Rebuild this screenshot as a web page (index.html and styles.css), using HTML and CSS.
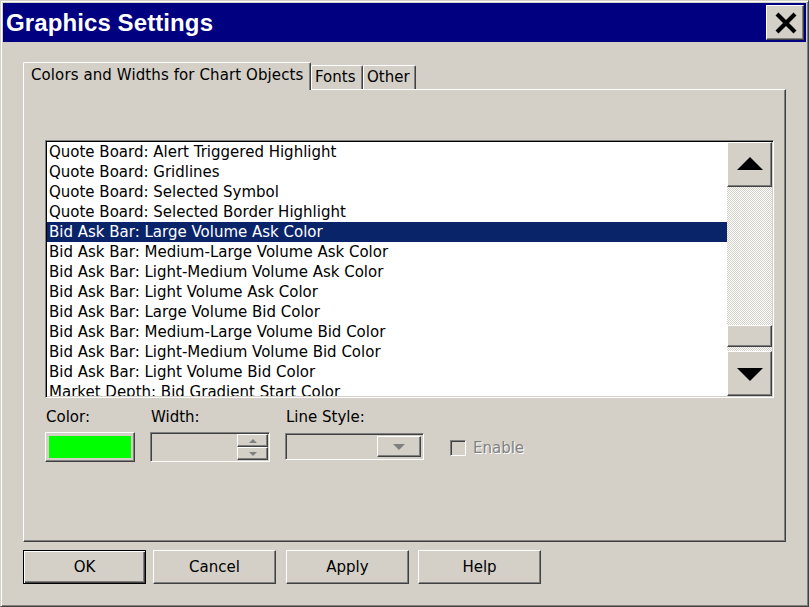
FILE: index.html
```html
<!DOCTYPE html>
<html>
<head>
<meta charset="utf-8">
<title>Graphics Settings</title>
<link rel="stylesheet" href="styles.css">
</head>
<body>
<div class="window">
  <div class="titlebar">
    <span class="title">Graphics Settings</span>
    <button class="close raised" aria-label="Close">
      <svg width="22" height="22" viewBox="0 0 22 22"><path d="M2 2 L20 20 M20 2 L2 20" stroke="#000" stroke-width="4.2" fill="none"/></svg>
    </button>
  </div>
  <div class="body">
    <div class="tabs">
      <div class="tab active">Colors and Widths for Chart Objects</div>
      <div class="tab fonts">Fonts</div>
      <div class="tab other">Other</div>
    </div>
    <div class="panel">
      <div class="listbox">
        <ul class="items">
          <li>Quote Board: Alert Triggered Highlight</li>
          <li>Quote Board: Gridlines</li>
          <li>Quote Board: Selected Symbol</li>
          <li>Quote Board: Selected Border Highlight</li>
          <li class="sel">Bid Ask Bar: Large Volume Ask Color</li>
          <li>Bid Ask Bar: Medium-Large Volume Ask Color</li>
          <li>Bid Ask Bar: Light-Medium Volume Ask Color</li>
          <li>Bid Ask Bar: Light Volume Ask Color</li>
          <li>Bid Ask Bar: Large Volume Bid Color</li>
          <li>Bid Ask Bar: Medium-Large Volume Bid Color</li>
          <li>Bid Ask Bar: Light-Medium Volume Bid Color</li>
          <li>Bid Ask Bar: Light Volume Bid Color</li>
          <li>Market Depth: Bid Gradient Start Color</li>
        </ul>
        <div class="scrollbar">
          <div class="sbtn raised"><span class="tri-up"></span></div>
          <div class="track">
            <div class="thumb raised"></div>
          </div>
          <div class="sbtn raised"><span class="tri-down"></span></div>
        </div>
      </div>
      <div class="controls">
        <div class="group g-color">
          <div class="label">Color:</div>
          <div class="colorbtn raised"><div class="swatch"></div></div>
        </div>
        <div class="group g-width">
          <div class="label">Width:</div>
          <div class="spin sunken">
            <div class="spinbtns">
              <div class="spb raised"><span class="mini-up"></span></div>
              <div class="spb raised"><span class="mini-down"></span></div>
            </div>
          </div>
        </div>
        <div class="group g-style">
          <div class="label">Line Style:</div>
          <div class="combo sunken">
            <div class="dropbtn raised"><span class="mini-down big"></span></div>
          </div>
        </div>
        <div class="check">
          <span class="box"></span>
          <span class="disabled">Enable</span>
        </div>
      </div>
    </div>
    <div class="buttons">
      <button class="btn default">OK</button>
      <button class="btn raised b-cancel">Cancel</button>
      <button class="btn raised b-apply">Apply</button>
      <button class="btn raised b-help">Help</button>
    </div>
  </div>
</div>
</body>
</html>
```
FILE: styles.css
```css
* { box-sizing: border-box; }
html, body { margin: 0; padding: 0; background: #d4d0c8; }
body {
  width: 809px;
  height: 607px;
  overflow: hidden;
  font-family: "DejaVu Sans", "Liberation Sans", Arial, sans-serif;
  font-size: 15px;
  color: #000;
}
.window {
  width: 809px;
  height: 607px;
  background: #d4d0c8;
  border-top: 1px solid #d4d0c8;
  border-left: 1px solid #d4d0c8;
  border-right: 1px solid #404040;
  border-bottom: 1px solid #404040;
  box-shadow: inset 1px 1px #fff, inset -1px -1px #808080;
  padding: 2px;
  display: flex;
  flex-direction: column;
}
.raised {
  background: #d4d0c8;
  border-top: 1px solid #fff;
  border-left: 1px solid #fff;
  border-right: 1px solid #404040;
  border-bottom: 1px solid #404040;
  box-shadow: inset -1px -1px #808080;
}
.sunken {
  border-top: 1px solid #808080;
  border-left: 1px solid #808080;
  border-right: 1px solid #fff;
  border-bottom: 1px solid #fff;
  box-shadow: inset 1px 1px #404040, inset -1px -1px #d4d0c8;
}
.titlebar {
  height: 39px;
  background: #000080;
  display: flex;
  align-items: flex-start;
  justify-content: space-between;
  padding: 2px 2px 0 3px;
}
.title {
  font-family: "Liberation Sans", Arial, sans-serif;
  color: #fff;
  font-weight: bold;
  font-size: 24px;
  line-height: 35px;
  letter-spacing: 0.1px;
}
.close {
  width: 38px;
  height: 35px;
  padding: 0;
  display: flex;
  align-items: center;
  justify-content: center;
}
.close svg { display: block; margin-left: 1px; }
.body {
  padding: 20px 20px 0 20px;
  display: flex;
  flex-direction: column;
}
.tabs {
  display: flex;
  align-items: flex-end;
  height: 27px;
  position: relative;
  z-index: 1;
}
.tab {
  background: #d4d0c8;
  border-top: 1px solid #fff;
  border-left: 1px solid #fff;
  border-right: 1px solid #404040;
  box-shadow: inset -1px 0 #808080;
  border-radius: 2px 2px 0 0;
  height: 24px;
  line-height: 22px;
  padding: 0 0 0 3px;
  white-space: nowrap;
}
.tab.active {
  width: 288px;
  padding-left: 7px;
  margin-bottom: -1px;
  height: 28px;
  line-height: 25px;
  letter-spacing: 0.1px;
}
.tab.fonts { width: 52px; }
.tab.other { width: 53px; }
.panel {
  width: 763px;
  height: 453px;
  border-top: 1px solid #fff;
  border-left: 1px solid #fff;
  border-right: 1px solid #404040;
  border-bottom: 1px solid #404040;
  box-shadow: inset -1px -1px #808080;
  padding: 50px 0 0 21px;
}
.listbox {
  width: 729px;
  height: 258px;
  display: flex;
  background: #fff;
  border-top: 1px solid #808080;
  border-left: 1px solid #808080;
  border-right: 1px solid #fff;
  border-bottom: 1px solid #fff;
  box-shadow: inset 1px 1px #000, inset -1px -1px #d4d0c8;
  padding: 1px;
}
.items {
  list-style: none;
  margin: 0;
  padding: 0;
  flex: 1;
  overflow: hidden;
}
.items li {
  height: 20px;
  line-height: 20px;
  padding-left: 2px;
  white-space: nowrap;
}
.items li.sel {
  background: #0a246a;
  color: #fff;
}
.scrollbar {
  width: 45px;
  display: flex;
  flex-direction: column;
}
.sbtn {
  width: 45px;
  height: 45px;
  display: flex;
  align-items: center;
  justify-content: center;
}
.tri-up {
  width: 0; height: 0;
  border-left: 13px solid transparent;
  border-right: 13px solid transparent;
  border-bottom: 13px solid #000;
  margin-top: -2px;
}
.tri-down {
  width: 0; height: 0;
  border-left: 13px solid transparent;
  border-right: 13px solid transparent;
  border-top: 13px solid #000;
  margin-top: 2px;
}
.track {
  flex: 1;
  display: flex;
  flex-direction: column;
  justify-content: flex-end;
  padding-bottom: 4px;
  background: repeating-conic-gradient(#fff 0 25%, #d4d0c8 0 50%) 0 0 / 2px 2px;
}
.thumb {
  height: 22px;
}
.controls {
  display: flex;
  align-items: flex-start;
  margin-top: 10px;
}
.group {
  display: flex;
  flex-direction: column;
}
.label {
  height: 18px;
  line-height: 18px;
  margin-bottom: 6px;
  padding-left: 1px;
  white-space: nowrap;
}
.g-color { width: 90px; }
.g-width { width: 120px; margin-left: 15px; }
.g-style { width: 139px; margin-left: 15px; }
.colorbtn {
  width: 90px;
  height: 30px;
  padding: 3px;
}
.swatch {
  width: 100%;
  height: 100%;
  background: #00ff00;
}
.spin {
  width: 120px;
  height: 30px;
  background: #d4d0c8;
  display: flex;
  justify-content: flex-end;
  padding: 1px 1px 1px 0;
}
.spinbtns {
  width: 31px;
  display: flex;
  flex-direction: column;
}
.spb {
  flex: 1;
  display: flex;
  align-items: center;
  justify-content: center;
}
.mini-up {
  width: 0; height: 0;
  border-left: 4px solid transparent;
  border-right: 4px solid transparent;
  border-bottom: 4px solid #808080;
}
.mini-down {
  width: 0; height: 0;
  border-left: 4px solid transparent;
  border-right: 4px solid transparent;
  border-top: 4px solid #808080;
}
.mini-down.big {
  border-left-width: 6px;
  border-right-width: 6px;
  border-top-width: 6px;
}
.combo {
  width: 139px;
  height: 27px;
  margin-top: 1px;
  background: #d4d0c8;
  display: flex;
  justify-content: flex-end;
  padding: 2px;
}
.dropbtn {
  width: 44px;
  height: 100%;
  display: flex;
  align-items: center;
  justify-content: center;
}
.check {
  display: flex;
  align-items: center;
  margin-left: 26px;
  margin-top: 31px;
  gap: 7px;
}
.box {
  width: 16px;
  height: 16px;
  border-top: 1px solid #808080;
  border-left: 1px solid #808080;
  border-right: 1px solid #fff;
  border-bottom: 1px solid #fff;
  box-shadow: inset 1px 1px #404040, inset -1px -1px #d4d0c8;
  background: #d4d0c8;
}
.disabled {
  color: #808080;
  text-shadow: 1px 1px #fff;
}
.buttons {
  display: flex;
  margin-top: 8px;
}
.btn {
  width: 123px;
  height: 34px;
  font: inherit;
  color: #000;
  padding: 0;
  margin: 0;
}
.btn.default {
  background: #d4d0c8;
  border: 1px solid #000;
  box-shadow: inset 1px 1px #fff, inset -1px -1px #404040, inset -2px -2px #808080;
}
.b-cancel { margin-left: 7px; }
.b-apply { margin-left: 10px; }
.b-help { margin-left: 9px; }
```
